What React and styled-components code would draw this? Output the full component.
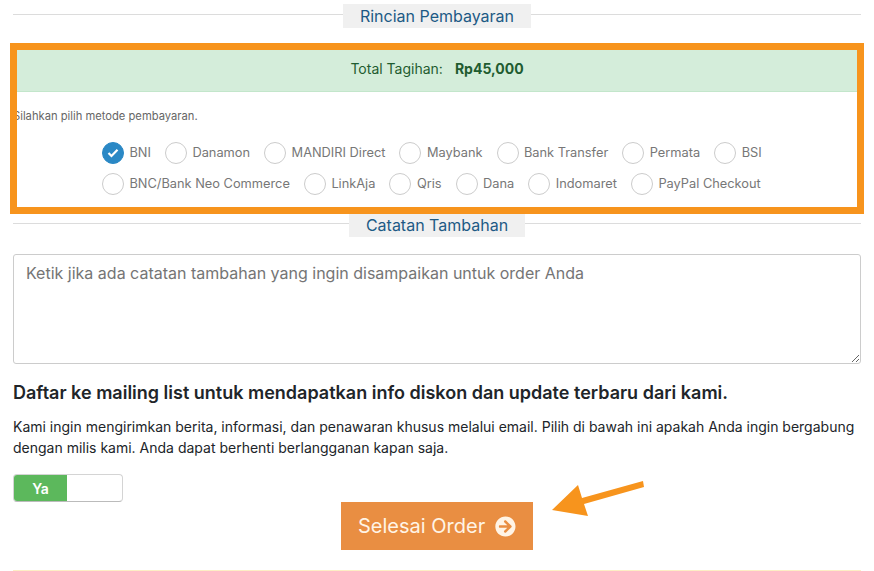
import React from "react";
import styled, { createGlobalStyle } from "styled-components";
import { FaArrowCircleRight } from "react-icons/fa";

const GlobalStyle = createGlobalStyle`
  html, body {
    margin: 0;
    padding: 0;
    background: #fff;
    overflow: hidden;
  }
  * {
    box-sizing: border-box;
  }
`;

const Page = styled.div`
  position: relative;
  width: 874px;
  height: 571px;
  padding: 4px 13px 0;
  font-family: Inter, "Liberation Sans", sans-serif;
  color: #212529;
  overflow: hidden;
`;

const SectionTitle = styled.div`
  display: flex;
  align-items: center;
  justify-content: center;
  height: 24px;
  margin-top: ${(p) => p.$top || 0}px;

  &::before,
  &::after {
    content: "";
    flex: 1;
    height: 1px;
    margin-top: -4px;
    background: #dcdcdc;
  }

  span {
    padding: 0 17px;
    height: 24px;
    line-height: 25px;
    font-size: 16px;
    color: #1d5a85;
    background: #f0f0f0;
  }
`;

const TotalBar = styled.div`
  display: flex;
  align-items: center;
  justify-content: center;
  gap: 12px;
  height: 43px;
  margin-top: 21px;
  padding-bottom: 4px;
  font-size: 14px;
  color: #1f5c30;
  background: #d4edda;
  border-bottom: 1px solid #c3e6cb;

  strong {
    font-weight: 700;
  }
`;

const Hint = styled.p`
  margin: 17px 0 0;
  height: 14px;
  line-height: 14px;
  font-size: 11.2px;
  color: #666;
`;

const Methods = styled.div`
  display: flex;
  flex-direction: column;
  gap: 9px;
  margin-top: 19px;
  margin-left: 89px;
`;

const MethodRow = styled.div`
  display: flex;
  align-items: center;
  height: 22px;
`;

const Method = styled.label`
  display: flex;
  align-items: center;
  gap: 5.5px;
  margin-right: ${(p) => p.$gap}px;
  font-size: 12.8px;
  color: #777;
`;

const MethodName = styled.span`
  margin-top: -2px;
`;

const Radio = styled.span`
  display: flex;
  align-items: center;
  justify-content: center;
  width: 22px;
  height: 22px;
  border-radius: 50%;
  border: 1px solid ${(p) => (p.$on ? "#2a88c5" : "#ccc")};
  background: ${(p) => (p.$on ? "#2a88c5" : "#fff")};
`;

const Notes = styled.textarea`
  display: block;
  width: 100%;
  height: 110px;
  margin-top: 17px;
  padding: 8px 12px;
  font-family: inherit;
  font-size: 16px;
  line-height: 20px;
  border: 1px solid #ccc;
  border-radius: 3px;
  outline: none;

  &::placeholder {
    color: #757575;
    opacity: 1;
  }
`;

const MailTitle = styled.h4`
  margin: 19px 0 0;
  height: 20px;
  line-height: 20px;
  font-size: 18px;
  font-weight: 600;
  white-space: nowrap;
  color: #212529;
`;

const MailText = styled.p`
  margin: 13px 0 0;
  font-size: 14px;
  line-height: 21px;
  color: #212529;
`;

const Toggle = styled.div`
  display: flex;
  width: 110px;
  height: 28px;
  margin-top: 16px;
  border: 1px solid #d4d4d4;
  border-bottom-color: #bbb;
  border-radius: 4px;
  background: #fff;
`;

const ToggleOn = styled.span`
  display: flex;
  align-items: center;
  justify-content: center;
  width: 53px;
  border-radius: 3px 0 0 3px;
  font-size: 14px;
  font-weight: 600;
  color: #fff;
  background: #5cb85c;
`;

const SubmitRow = styled.div`
  display: flex;
  margin-left: 328px;
`;

const Submit = styled.button`
  display: flex;
  align-items: center;
  gap: 10px;
  height: 48px;
  width: 192px;
  padding: 0 17px;
  border: 0;
  font-family: inherit;
  font-size: 20px;
  white-space: nowrap;
  color: #fff4e6;
  background: #e98e42;
`;

const BottomRule = styled.div`
  height: 1px;
  margin-top: 20px;
  background: #fdeec4;
`;

const Highlight = styled.div`
  position: absolute;
  left: 10px;
  top: 43px;
  width: 854px;
  height: 171px;
  border: 7px solid #f7941d;
  pointer-events: none;
`;

const Arrow = styled.svg`
  position: absolute;
  left: 550px;
  top: 476px;
`;

const firstRow = ["BNI", "Danamon", "MANDIRI Direct", "Maybank", "Bank Transfer", "Permata", "BSI"];

const secondRow = ["BNC/Bank Neo Commerce", "LinkAja", "Qris", "Dana", "Indomaret", "PayPal Checkout"];

function MethodItem({ name }) {
  const on = name === "BNI";
  return (
    <Method $gap={14}>
      <Radio $on={on}>
        {on && (
          <svg width="12" height="10" viewBox="0 0 12 10">
            <path d="M1.5 5 L4.5 8 L10.5 1.8" fill="none" stroke="#fff" strokeWidth="2.2" />
          </svg>
        )}
      </Radio>
      <MethodName>{name}</MethodName>
    </Method>
  );
}

export default function App() {
  return (
    <Page>
      <GlobalStyle />
      <SectionTitle>
        <span>Rincian Pembayaran</span>
      </SectionTitle>
      <TotalBar>
        <span>Total Tagihan:</span>
        <strong>Rp45,000</strong>
      </TotalBar>
      <Hint>Silahkan pilih metode pembayaran.</Hint>
      <Methods>
        <MethodRow>
          {firstRow.map((name) => (
            <MethodItem key={name} name={name} />
          ))}
        </MethodRow>
        <MethodRow>
          {secondRow.map((name) => (
            <MethodItem key={name} name={name} />
          ))}
        </MethodRow>
      </Methods>
      <SectionTitle $top={18}>
        <span>Catatan Tambahan</span>
      </SectionTitle>
      <Notes placeholder="Ketik jika ada catatan tambahan yang ingin disampaikan untuk order Anda" />
      <MailTitle>Daftar ke mailing list untuk mendapatkan info diskon dan update terbaru dari kami.</MailTitle>
      <MailText>
        Kami ingin mengirimkan berita, informasi, dan penawaran khusus melalui email. Pilih di bawah ini apakah Anda ingin bergabung
        dengan milis kami. Anda dapat berhenti berlangganan kapan saja.
      </MailText>
      <Toggle>
        <ToggleOn>Ya</ToggleOn>
      </Toggle>
      <SubmitRow>
        <Submit>
          Selesai Order
          <FaArrowCircleRight size={23} />
        </Submit>
      </SubmitRow>
      <BottomRule />
      <Highlight />
      <Arrow width="100" height="46" viewBox="0 0 100 46">
        <path d="M93 5 L32 22 L28 9 L2 34 L38 40 L34 28 L94 11 Z" fill="#f7941d" />
      </Arrow>
    </Page>
  );
}
